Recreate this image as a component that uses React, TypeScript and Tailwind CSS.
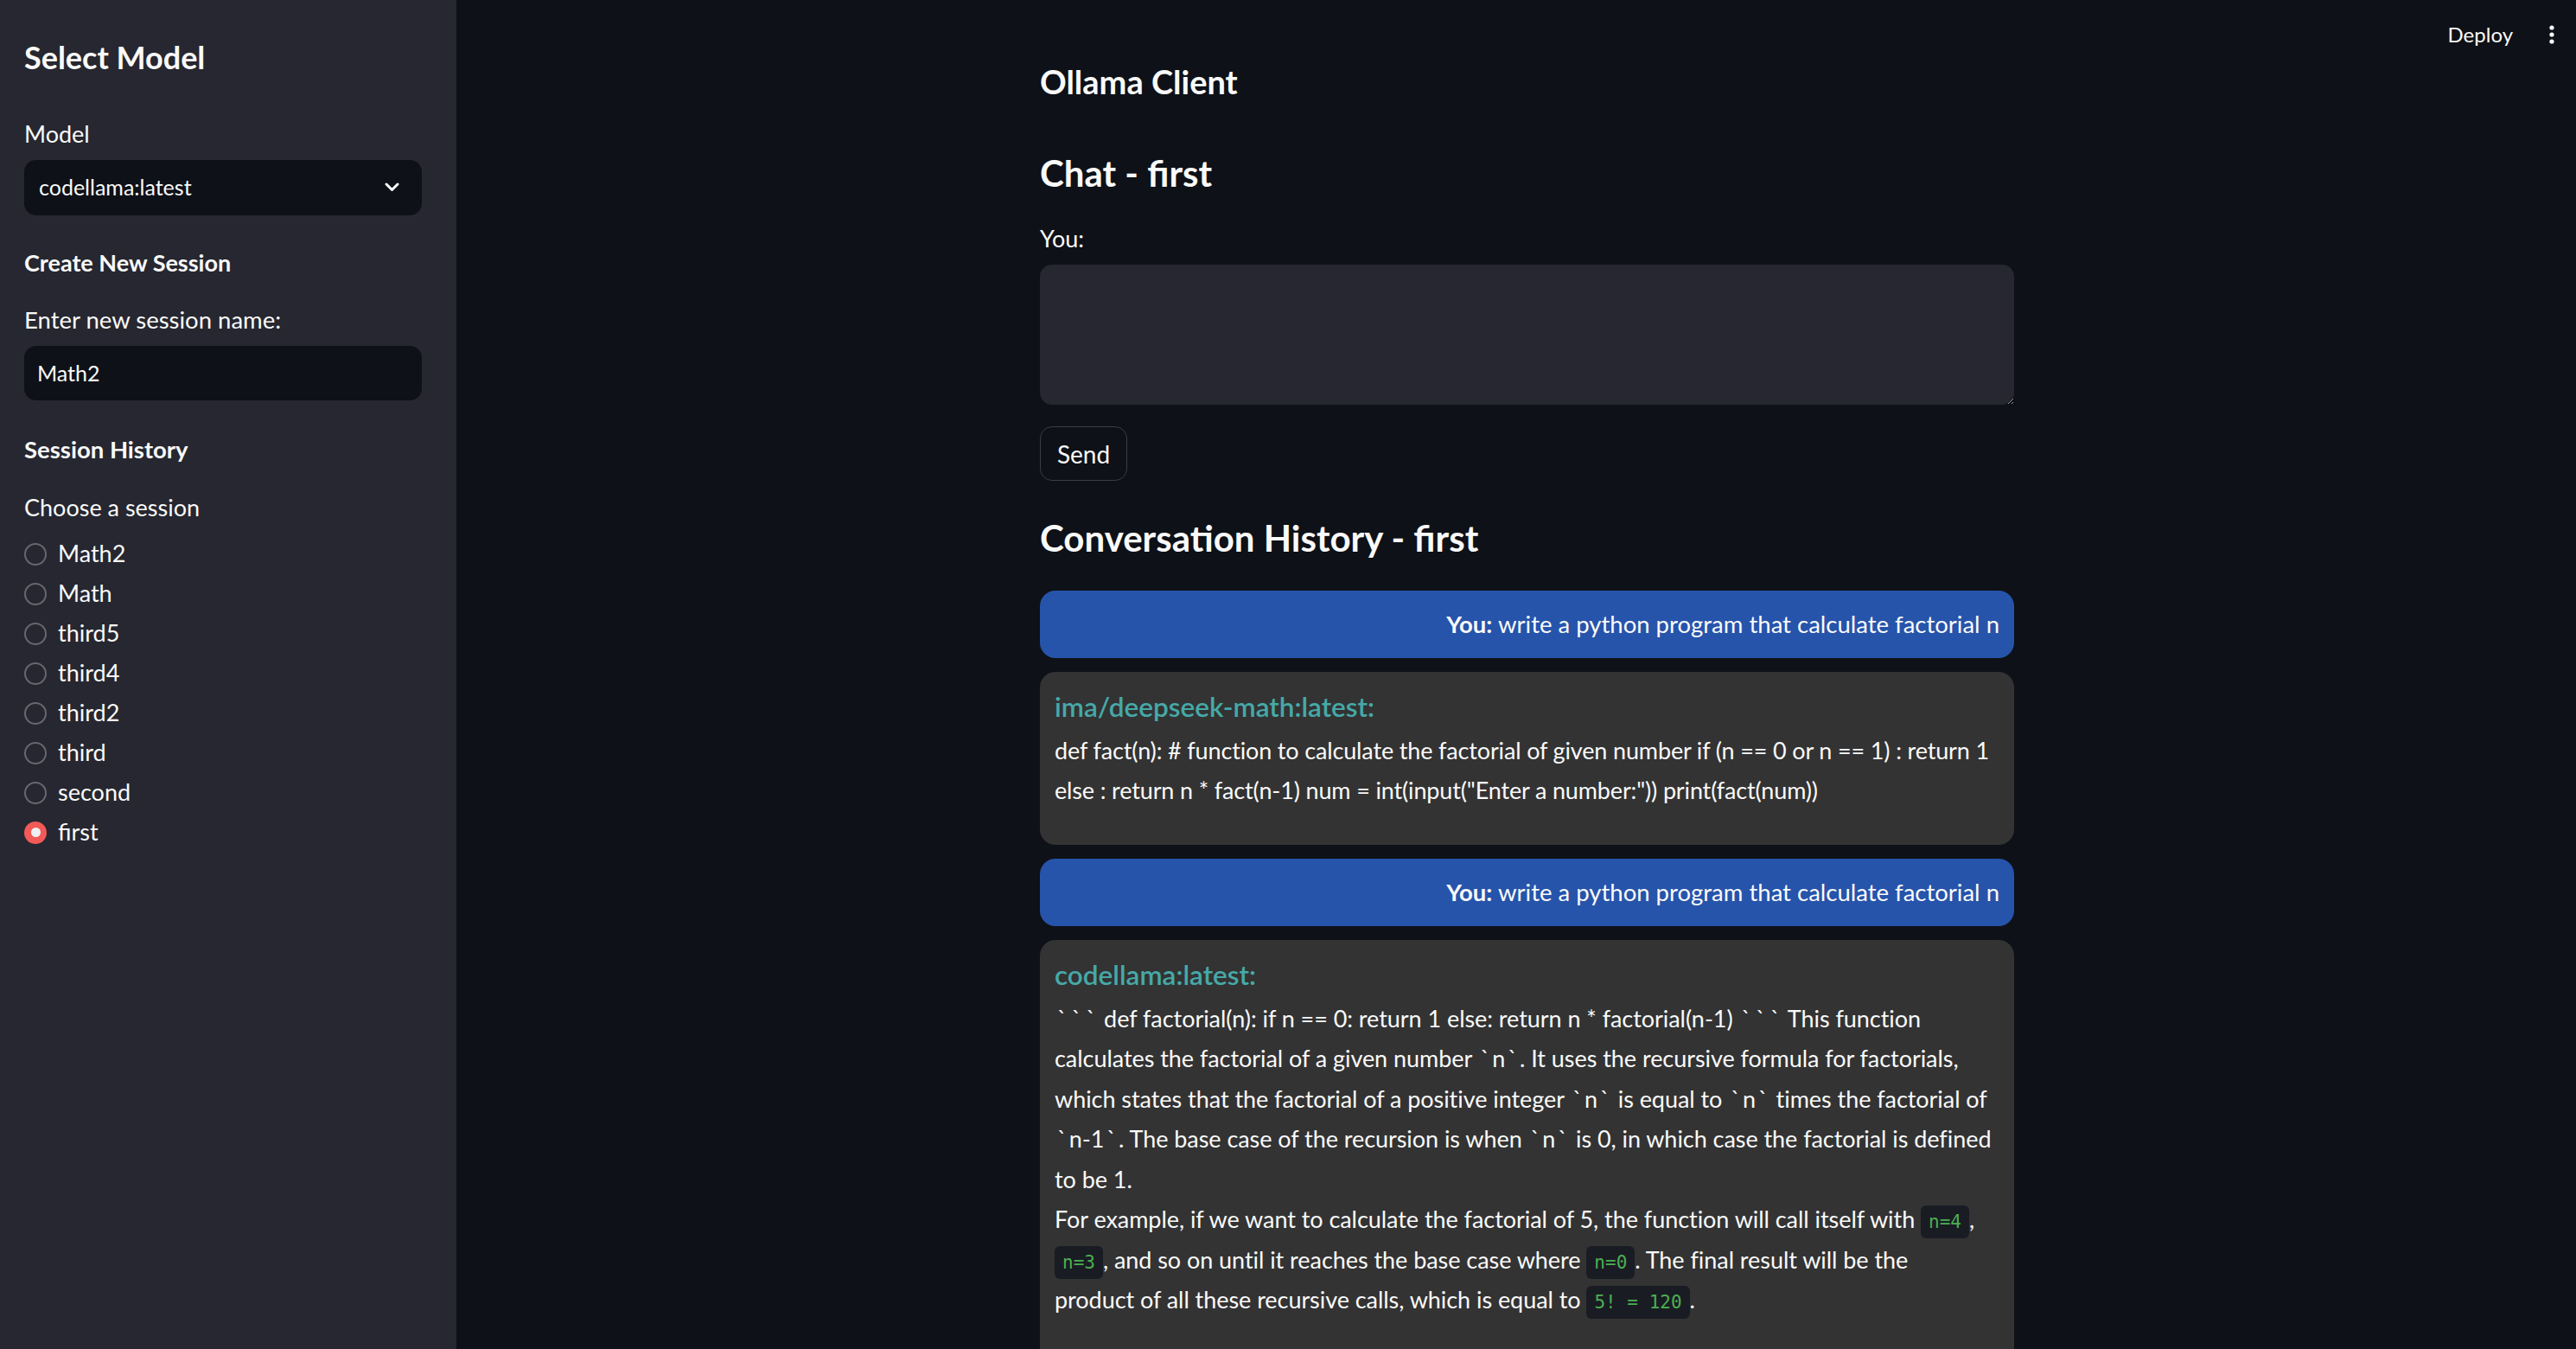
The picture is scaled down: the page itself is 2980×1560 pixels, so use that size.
import React from 'react';

const sessions = ['Math2', 'Math', 'third5', 'third4', 'third2', 'third', 'second', 'first'];

// backtick as Source Sans draws it: wide with air on both sides
const Tick = () => <span className="mx-[3px]">`</span>;

const Code: React.FC<{ children: React.ReactNode }> = ({ children }) => (
  <code className="rounded-[6px] bg-[#1a1c24] px-[9px] py-[7px] font-['DejaVu_Sans_Mono',monospace] text-[21px] leading-none tracking-normal text-[#4caf50]">
    {children}
  </code>
);

const UserBubble: React.FC<{ text: string }> = ({ text }) => (
  <div className="rounded-[18px] bg-[#2654ab] px-[17px] py-[16px] text-right text-[27.5px] leading-[46px]">
    <span className="font-bold">You:</span> {text}
  </div>
);

const BotBubble: React.FC<{ model: string; tight?: boolean; children: React.ReactNode }> = ({ model, tight, children }) => (
  <div
    className={`rounded-[18px] bg-[#333333] px-[17px] pt-[17px] pb-[16px] text-[27px] leading-[46.5px] ${
      tight ? 'tracking-[-0.15px]' : 'tracking-[-0.05px]'
    }`}
  >
    <div className="mb-[4px] text-[31.5px] font-semibold leading-[46.5px] tracking-normal text-[#46a9a8]">{model}</div>
    {children}
  </div>
);

export default function App() {
  return (
    <div className="flex h-[1560px] w-full overflow-hidden bg-[#0e1117] font-['Lato',sans-serif] text-[#fafafa]">
      {/* Sidebar */}
      <aside className="flex h-full w-[528px] shrink-0 flex-col bg-[#262730] pl-[28px] pr-[40px] pt-[44px]">
        <h2 className="text-[36px] font-bold leading-[44px]">Select Model</h2>

        <div className="mt-[48.6px] text-[27px] leading-[36px]">Model</div>
        <div className="mt-[12.7px] flex h-[63.4px] items-center justify-between rounded-[14px] bg-[#0e1117] pl-[17px] pr-[26px] text-[25px]">
          <span>codellama:latest</span>
          <svg width="17" height="11" viewBox="0 0 17 11" fill="none">
            <path d="M2 2l6.5 6.5L15 2" stroke="#fafafa" strokeWidth="3" strokeLinecap="round" strokeLinejoin="round" />
          </svg>
        </div>

        <h3 className="mt-[37.3px] text-[27px] font-bold leading-[36px]">Create New Session</h3>
        <div className="mt-[29.6px] text-[27.5px] leading-[36px]">Enter new session name:</div>
        <div className="mt-[12.4px] flex h-[63.4px] items-center rounded-[14px] bg-[#0e1117] pl-[15px] text-[25px]">
          Math2
        </div>

        <h3 className="mt-[38.7px] text-[27.5px] font-bold leading-[36px]">Session History</h3>
        <div className="mt-[30.6px] text-[27px] leading-[36px]">Choose a session</div>
        <div className="mt-[13px] flex flex-col">
          {sessions.map((s) => (
            <div key={s} className="flex h-[46px] items-center gap-[13px]">
              {s === 'first' ? (
                <span className="flex h-[26px] w-[26px] items-center justify-center rounded-full bg-[#f25a57]">
                  <span className="h-[11px] w-[11px] rounded-full bg-[#eef0f4]" />
                </span>
              ) : (
                <span className="h-[26px] w-[26px] rounded-full border-2 border-[#66676f]" />
              )}
              <span className="text-[27px]">{s}</span>
            </div>
          ))}
        </div>
      </aside>

      {/* Main */}
      <main className="relative h-full flex-1 overflow-hidden">
        <div className="absolute right-[25px] top-0 flex h-[80px] items-center">
          <span className="text-[24px]">Deploy</span>
          <svg className="ml-[42px]" width="6" height="22" viewBox="0 0 6 22">
            <circle cx="3" cy="3" r="2.6" fill="#fafafa" />
            <circle cx="3" cy="11" r="2.6" fill="#fafafa" />
            <circle cx="3" cy="19" r="2.6" fill="#fafafa" />
          </svg>
        </div>

        <div className="ml-[675px] flex w-[1127px] flex-col pt-[72px]">
          <h3 className="text-[38px] font-bold leading-[44px]">Ollama Client</h3>
          <h2 className="mt-[59px] text-[42px] font-bold leading-[50px]">Chat - first</h2>

          <div className="mt-[33px] text-[27px] leading-[36px]">You:</div>
          <textarea className="mt-[12px] h-[162px] w-full resize-y rounded-[14px] bg-[#262730] outline-none" />

          <button className="mt-[25px] h-[63px] w-[101px] rounded-[14px] border border-[#3b3d45] text-[28px]">
            Send
          </button>

          <h2 className="mt-[41px] text-[42px] font-bold leading-[50px]">Conversation History - first</h2>

          <div className="mt-[36px] flex flex-col gap-[16px]">
            <UserBubble text="write a python program that calculate factorial n" />
            <BotBubble model="ima/deepseek-math:latest:" tight>
              <p className="mb-[23.5px]">
                def fact(n): # function to calculate the factorial of given number if (n == 0 or n == 1) : return 1
                else : return n * fact(n-1) num = int(input(&quot;Enter a number:&quot;)) print(fact(num))
              </p>
            </BotBubble>
            <UserBubble text="write a python program that calculate factorial n" />
            <BotBubble model="codellama:latest:">
              <p>
                <Tick />
                <Tick />
                <Tick /> def factorial(n): if n == 0: return 1 else: return n * factorial(n-1) <Tick />
                <Tick />
                <Tick /> This function calculates the factorial of a given number <Tick />n<Tick />. It uses the
                recursive formula for factorials, which states that the factorial of a positive integer <Tick />n<Tick />{' '}
                is equal to <Tick />n<Tick /> times the factorial of <Tick />n-1<Tick />. The base case of the recursion
                is when <Tick />n<Tick /> is 0, in which case the factorial is defined to be 1.
              </p>
              <p className="mb-[35px]">
                For example, if we want to calculate the factorial of 5, the function will call itself with{' '}
                <Code>n=4</Code>, <Code>n=3</Code>, and so on until it reaches the base case where <Code>n=0</Code>. The
                final result will be the
                <br />
                product of all these recursive calls, which is equal to <Code>5! = 120</Code>.
              </p>
              <p className="mb-[23.5px]">
                You can call this function like so, which will print the value 120 for you: <Code>x</Code>
              </p>
            </BotBubble>
          </div>
        </div>
      </main>
    </div>
  );
}
